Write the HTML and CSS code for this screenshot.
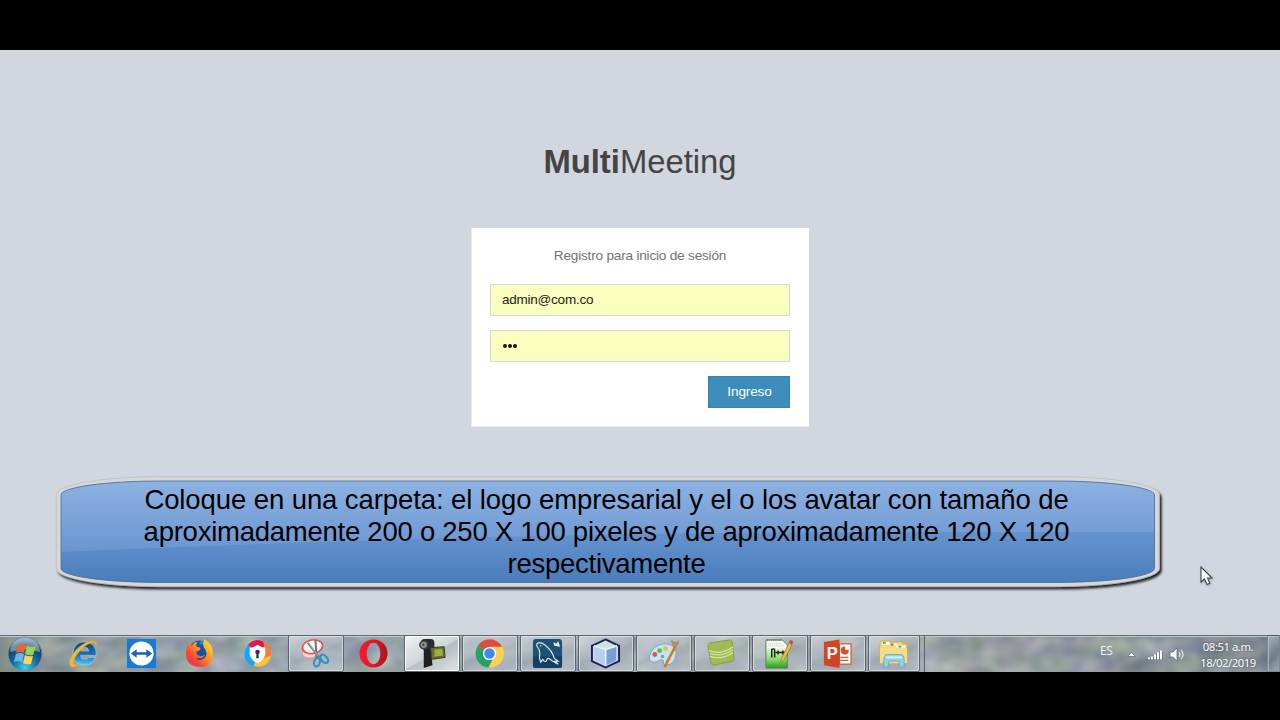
FILE: index.html
```html
<!DOCTYPE html>
<html lang="es">
<head>
<meta charset="utf-8">
<title>MultiMeeting</title>
<link rel="stylesheet" href="styles.css">
</head>
<body>
<div class="screen">
  <main class="desktop">
    <h1 class="brand"><b>Multi</b>Meeting</h1>
    <section class="login">
      <p class="login-title">Registro para inicio de sesión</p>
      <div class="field">admin@com.co</div>
      <div class="field"><span class="dots"><i></i><i></i><i></i></span></div>
      <button class="submit">Ingreso</button>
    </section>
    <aside class="callout">
      <svg class="callout-shape" width="1116" height="122" viewBox="50 472 1116 122">
        <defs>
          <linearGradient id="base" x1="0" y1="0" x2="0" y2="1"><stop offset="0" stop-color="#79a4da"/><stop offset=".6" stop-color="#608fcb"/><stop offset="1" stop-color="#497cba"/></linearGradient>
          <linearGradient id="gloss" x1="0" y1="0" x2="0" y2="1"><stop offset="0" stop-color="#8eb3e3"/><stop offset="1" stop-color="#6995cf"/></linearGradient>
          <filter id="shade" x="-5%" y="-15%" width="110%" height="140%"><feDropShadow dx="2" dy="2.5" stdDeviation="1.3" flood-color="#000" flood-opacity=".85"/></filter>
          <clipPath id="inside"><rect x="61" y="481" width="1093.5" height="101.5" rx="100" ry="14"/></clipPath>
        </defs>
        <rect x="56.3" y="476.6" width="1103" height="110" rx="105" ry="18" fill="#d7d7d6" stroke="#b9bbc0" stroke-width=".7" filter="url(#shade)"/>
        <g clip-path="url(#inside)">
          <path d="M60 480H1156V584H60Z" fill="url(#base)"/>
          <path d="M60 480H1156V532H850Q500 533 60 552Z" fill="url(#gloss)"/>
        </g>
        <rect x="61" y="481" width="1093.5" height="101.5" rx="100" ry="14" fill="none" stroke="#486c9c" stroke-width=".8"/>
      </svg>
      <p class="callout-text"><span class="wide">Coloque en una carpeta: el logo empresarial y el o los avatar con tamaño de</span><br>aproximadamente 200 o 250 X 100 pixeles y de aproximadamente 120 X 120<br>respectivamente</p>
    </aside>
    <svg class="cursor" width="16" height="22" viewBox="0 0 16 22"><path d="M1 1V16L4.5 13L7 18.5L9.8 17.3L7.5 12H12Z" fill="#fff" stroke="#3d4358" stroke-width="1.1"/></svg>
  </main>

  <footer class="taskbar">
    <svg class="texture" width="1280" height="37"><filter id="mist" x="0" y="0" width="100%" height="100%" color-interpolation-filters="sRGB"><feTurbulence type="fractalNoise" baseFrequency=".035 .05" numOctaves="2" seed="8"/><feColorMatrix values=".7 .1 0 0 .2 .6 .3 0 0 .18 .5 0 .3 0 .23 0 0 0 0 1"/></filter><rect width="1280" height="37" filter="url(#mist)"/></svg>
    <div class="start">
      <svg width="36" height="36" viewBox="0 0 36 36">
        <defs><radialGradient id="orb" cx=".5" cy=".9" r=".9"><stop offset="0" stop-color="#43cbea"/><stop offset=".4" stop-color="#16709e"/><stop offset=".75" stop-color="#123e63"/><stop offset="1" stop-color="#94b4c3"/></radialGradient></defs>
        <circle cx="18" cy="18" r="17" fill="url(#orb)" stroke="#7893a0"/>
        <path d="M3 16Q4 3 18 2Q32 3 33 16Q18 11 3 16" fill="#c3dbe4" opacity=".5"/>
        <path d="M11 9Q15 7 19 9L17 17Q13 15 9 17Z" fill="#ed6428"/>
        <path d="M20 10Q24 12 29 10L26 19Q22 20 18 18Z" fill="#9bd24e"/>
        <path d="M9 18Q13 16 17 18L15 26Q11 24 7 26Z" fill="#66b5ee"/>
        <path d="M18 19Q22 21 26 20L24 28Q19 29 16 27Z" fill="#ffd15a"/>
      </svg>
    </div>
    <div class="slot"><div class="app">
      <svg viewBox="0 0 32 32"><defs><linearGradient id="ie" x1="0" y1="0" x2="0" y2="1"><stop stop-color="#17426b"/><stop offset=".6" stop-color="#1b79be"/><stop offset="1" stop-color="#54c7f2"/></linearGradient></defs><path fill-rule="evenodd" d="M29 18H13Q13 22 17 22Q20 22 21 20H28Q26 28 17 28Q5 27 5 16Q6 4 17 4Q30 5 29 18ZM13 13.5H21.500Q21 9.500 17.200 9.500Q13.500 9.500 13 13.500Z" fill="url(#ie)" stroke="#c3dcea" stroke-width=".5"/><path d="M30 6C29 -1 15 4 7 14C0 23 0 30 5 30Q8 30 12 27C3 30 4 23 11 15C18 6 29 1 28 7Z" fill="#f1b73c" stroke="#d99e25" stroke-width=".5"/></svg>
    </div></div>
    <div class="slot"><div class="app">
      <svg viewBox="0 0 32 32"><rect x="1" y="1" width="30" height="30" rx="1" fill="#167bd4"/><circle cx="16" cy="16" r="12.5" fill="#fff"/><path d="M5 16L11 11.500V14.700H21V11.500L27 16L21 20.500V17.300H11V20.500Z" fill="#1766ad"/></svg>
    </div></div>
    <div class="slot"><div class="app">
      <svg viewBox="0 0 32 32"><defs><linearGradient id="fox" x1="1" y1="0" x2="0" y2="1"><stop stop-color="#fff044"/><stop offset=".4" stop-color="#ff9a20"/><stop offset=".7" stop-color="#fb4734"/><stop offset="1" stop-color="#e82275"/></linearGradient></defs><circle cx="16" cy="13" r="10.5" fill="#164fa7"/><path d="M16 3Q22 2 24 8Q19 5 16 8Z" fill="#1a83db"/><path d="M21 1Q31 7 30 18Q29 30 16 30Q2 29 2 16Q2 8 6 4Q6 6 8 8Q10 4 14 4Q12 7 13 9L17 10Q17 13 13 14Q12 17 15 18Q18 20 22 17Q18 23 12 20Q15 25 21 21Q25 17 22 12Q18 7 21 1Z" fill="url(#fox)"/></svg>
    </div></div>
    <div class="slot"><div class="app">
      <svg viewBox="0 0 32 32"><path d="M6 7Q16-3 26 7Q29 10 29 13L16 16Z" fill="#e4174d"/><path d="M6 7Q1 14 3 21Q6 28 14 30L16 16Z" fill="#16a6fb"/><path d="M25 6Q34 17 26 26Q21 31 12 29L16 18Z" fill="#fdc32a"/><path d="M22 3Q30 8 30 18L23 21V10Z" fill="#fb7838"/><path d="M8 10Q12 10 16 7Q20 10 24 10V17Q22 24 16 26Q10 24 8 17Z" fill="#fff"/><circle cx="16" cy="14.5" r="2.4" fill="#303746"/><path d="M15 15H17L17.4 21H14.6Z" fill="#303746"/></svg>
    </div></div>
    <div class="slot"><div class="app open">
      <svg viewBox="0 0 32 32"><ellipse cx="10" cy="16" rx="8" ry="5" fill="#f5d9da" stroke="#ed9292" stroke-width="1.5"/><ellipse cx="13" cy="9" rx="10.5" ry="7" fill="#f8f5f4" stroke="#df5554" stroke-width="1.7" transform="rotate(-10 13 9)"/><path d="M8 5L20 20M16 2L17 20" stroke="#687175" stroke-width="2"/><path d="M9 5L19 19" stroke="#eef5f5" stroke-width=".6"/><ellipse cx="17.5" cy="25" rx="3" ry="4.5" fill="none" stroke="#338fc2" stroke-width="2.2" transform="rotate(15 17.5 25)"/><ellipse cx="25" cy="21.5" rx="3" ry="5" fill="none" stroke="#338fc2" stroke-width="2.2" transform="rotate(-40 25 21.5)"/></svg>
    </div></div>
    <div class="slot"><div class="app">
      <svg viewBox="0 0 32 32"><defs><linearGradient id="op"><stop stop-color="#ff1829"/><stop offset=".65" stop-color="#d61625"/><stop offset="1" stop-color="#a5161c"/></linearGradient></defs><path fill-rule="evenodd" d="M16 1.500A14.500 14.500 0 1 0 16 30.500A14.500 14.500 0 1 0 16 1.500ZM16 5C12 5 9 10 9 16S12 27 16 27S23 22 23 16S20 5 16 5Z" fill="url(#op)"/></svg>
    </div></div>
    <div class="slot"><div class="app open active">
      <svg viewBox="0 0 32 32"><path d="M8 10L15 7L17 28L8 31Z" fill="#1e2022"/><rect x="5" y="1" width="14" height="11" rx="4" fill="#292c2e"/><circle cx="8" cy="7" r="4" fill="#8d9091" stroke="#3a3c3e" stroke-width="1.5"/><circle cx="7.5" cy="7" r="1.3" fill="#693f43"/><path d="M15 10L29 9L30 20L16 22Z" fill="#66702c" stroke="#33391c"/><path d="M19 12L27 11L28 18L19 19Z" fill="#a0ad45"/></svg>
    </div></div>
    <div class="slot"><div class="app open">
      <svg viewBox="0 0 32 32"><path d="M16 16L4 8A14.500 14.500 0 0 1 29 9Z" fill="#dc4c40"/><path d="M4 8A14.500 14.500 0 0 0 15 30.500L21 19Z" fill="#25a367"/><path d="M29 9A14.500 14.500 0 0 1 15 30.500L22 17L16 9Z" fill="#fed050"/><circle cx="16" cy="16" r="6.8" fill="#fff"/><circle cx="16" cy="16" r="5.4" fill="#4587f2"/></svg>
    </div></div>
    <div class="slot"><div class="app open">
      <svg viewBox="0 0 32 32"><rect x="1" y="1" width="30" height="30" rx="3" fill="#1d5276"/><path d="M1 19H31V28Q31 31 28 31H4Q1 31 1 28Z" fill="#154160"/><path d="M5 6Q8 3 13 7Q21 13 23 21L27 24L24 24L27 27L20 23Q16 19 15 23Q14 26 11 22L9 25Q7 20 8 16Q8 12 5 8Z" fill="none" stroke="#dce7ee" stroke-width="1.2"/><circle cx="9" cy="8" r=".7" fill="#fff"/><path d="M22 4L25 6L27 3L29 9L23 8Z" fill="#e6eff4"/></svg>
    </div></div>
    <div class="slot"><div class="app open">
      <svg viewBox="0 0 32 32"><path d="M16 1.500L30 8V24L16 30.500L2 24V8Z" fill="#c6d6e4" stroke="#211e56" stroke-width="2"/><path d="M16 3L27 8.500L17 12L5 8.500Z" fill="#cbe4dd"/><path d="M5 9L16 12V28L5 23Z" fill="#b5cff0"/><path d="M17 12L27 9V23L17 28Z" fill="#7c9ed5"/><path d="M16 12L4 8M16 12V28M16 12L28 8" stroke="#e7f1fb" stroke-width="1.5"/></svg>
    </div></div>
    <div class="slot"><div class="app open">
      <svg viewBox="0 0 32 32"><path d="M3 15Q6 8 16 6Q29 6 29 16Q28 27 19 28Q15 28 16 24Q16 21 12 23Q5 27 2 23Q0 20 3 15Z" fill="#c6e5f2" stroke="#6daec9"/><circle cx="7" cy="17" r="2.5" fill="#e45540"/><circle cx="12" cy="13" r="2.5" fill="#60b852"/><circle cx="18" cy="11" r="2.5" fill="#f2bd34"/><circle cx="15" cy="19" r="1.8" fill="#779eaf"/><path d="M17 30L28 9" stroke="#d77824" stroke-width="2.7"/><path d="M24 3L29 5L32 3L30 8L27 10Z" fill="#bd9063" stroke="#9c7049" stroke-width=".6"/></svg>
    </div></div>
    <div class="slot"><div class="app open">
      <svg viewBox="0 0 32 32"><path d="M4 5L25 2Q27 2 27 4L29 22Q29 24 27 24L8 28Q6 28 5 26L2 8Q2 6 4 5Z" fill="#a5b957" stroke="#8b9c45"/><path d="M3 13Q16 18 28 9M4 16Q17 20 28 12M4 19Q17 23 28 15" fill="none" stroke="#dbe4a8" stroke-width="1.2"/></svg>
    </div></div>
    <div class="slot"><div class="app open">
      <svg viewBox="0 0 32 32"><defs><linearGradient id="note" x1="0" y1="0" x2="0" y2="1"><stop offset=".25" stop-color="#f4fbef"/><stop offset=".7" stop-color="#86d969"/><stop offset="1" stop-color="#24a01b"/></linearGradient></defs><path d="M2 2H19L24 7V31H2Z" fill="url(#note)" stroke="#667660"/><path d="M3 2H19" stroke="#777" stroke-width="2" stroke-dasharray="1 1"/><path d="M4 6H18M4 8H20" stroke="#cad2d0" stroke-width=".7"/><path d="M8 20V11M8 12Q11 10 11 13V20M12 15H17M14.500 13V17M17 15H22M19.500 13V17" fill="none" stroke="#162617" stroke-width="1.5"/><path d="M17 26L18 21L26 5L29 7L21 22Z" fill="#eebb3d" stroke="#95702c" stroke-width=".7"/><path d="M26 5L27 2L30 3L29 7Z" fill="#b44b4d"/></svg>
    </div></div>
    <div class="slot"><div class="app open">
      <svg viewBox="0 0 32 32"><path d="M18 6H30V27H18Z" fill="#fff" stroke="#d65333" stroke-width="1.2"/><circle cx="23.500" cy="13" r="4.200" fill="#d65333"/><path d="M24 12V8Q28 8 28 12Z" fill="#fff"/><path d="M19 20H27M19 23H27" stroke="#d65333" stroke-width="1.300"/><path d="M2 4L18 1.500V31L2 28Z" fill="#d34524"/><text x="5" y="22" class="office">P</text></svg>
    </div></div>
    <div class="slot stack"><div class="app open">
      <svg viewBox="0 0 32 32"><path d="M2 6V26H26L30 24V6H25V4H15V6H13V3H3Z" fill="#f5db76" stroke="#c9a743" stroke-width=".8"/><path d="M4 4H12V7H4M12 6H20V8H12M19 8H28V11H19" fill="#f8fbef"/><path d="M5 4H8V6H5Z" fill="#43b557"/><path d="M13 6H16V8H13Z" fill="#d85a36"/><path d="M21 8H24V10H21Z" fill="#3ba4dc"/><path d="M2 10H30V26H2Z" fill="#f5de82"/><path d="M6 22Q6 17 10 17H23Q27 17 27 22V30H22V24H11V30H6Z" fill="#91d0ea" stroke="#61a6c7" stroke-width=".8"/><path d="M8 20H25" stroke="#d6f3fb" stroke-width="2"/></svg>
    </div></div>
    <div class="tray">
      <span class="lang">ES</span>
      <svg class="tray-icons" width="60" height="18" viewBox="0 0 60 18">
        <path d="M2.500 11.500L6.500 7.500L10.500 11.500Z" fill="#f5f8fb" stroke="#5b6272" stroke-width=".7"/>
        <path d="M24 15V13M27 15V12M30 15V10M33 15V8M36 15V6" stroke="#505963" stroke-width="3.200"/>
        <path d="M24 14.500V12.500M27 14.500V11.500M30 14.500V9.500M33 14.500V7.500M36 14.500V5.500" stroke="#fff" stroke-width="2.200"/>
        <path d="M45 7H48L52 3V16L48 12H45Z" fill="#fff" stroke="#555f69" stroke-width=".7"/><path d="M54 7Q56 9.500 54 12M56 5Q60 9.500 56 14" stroke="#eef2f4" fill="none" stroke-width="1.100"/>
      </svg>
      <div class="clock">08:51 a.m.<br>18/02/2019</div>
      <div class="peek"></div>
    </div>
  </footer>
</div>
</body>
</html>
```
FILE: styles.css
```css
* { box-sizing: border-box; }
body { margin: 0; background: #000; font-family: "Liberation Sans", Arial, sans-serif; }
.screen { width: 1280px; height: 720px; padding: 50px 0 48px; background: #000; overflow: hidden; }
.desktop { position: relative; height: 585px; padding-top: 91px; background: #d2d6df; }
.brand { margin: 0; height: 87px; text-align: center; font-size: 32.8px; line-height: 41px; font-weight: 400; color: #444; }
.brand b { font-weight: 700; }
.login { width: 338px; height: 199px; margin: 0 auto; padding: 18px 19px 0 18px; background: #fff; border: 1px solid #e8eaed; border-width: 0 0 1px 1px; }
.login-title { margin: 0 0 19px; text-align: center; font-size: 13.6px; line-height: 19px; letter-spacing: -.2px; color: #727272; }
.field { height: 32px; width: 300px; margin-bottom: 14px; padding: 0 11px; border: 1px solid #d2d6de; background: #faffbd; color: #222; font-size: 13.5px; letter-spacing: -.23px; line-height: 30px; }
.dots { display: flex; height: 30px; align-items: center; gap: 1px; padding-left: 1px; }
.dots i { width: 4px; height: 4px; border-radius: 50%; background: #111; }
.submit { display: block; margin: 0 0 0 auto; width: 82px; height: 32px; padding: 0 0 1px 1px; border: 1px solid #3684b0; background: #3c8dbc; color: #fff; font: 13.6px "Liberation Sans", Arial, sans-serif; letter-spacing: -.15px; }
.callout { position: absolute; left: 50px; top: 422px; width: 1116px; height: 122px; }
.callout-shape { display: block; position: absolute; inset: 0; }
.callout-text { position: relative; margin: 0; padding-top: 12px; width: 1113px; text-align: center; font-size: 27.5px; line-height: 32px; letter-spacing: -.25px; color: #000; white-space: nowrap; }
.wide { letter-spacing: -.09px; }
.cursor { position: absolute; left: 1200px; top: 516px; filter: drop-shadow(1px 1px 1px #777b8788); }
.taskbar { position: relative; display: flex; height: 37px; overflow: hidden; background: linear-gradient(90deg, #6b7878 0, #98a4a8 7%, #9caeb8 22%, #9ba7b0 55%, #92989f 80%, #7a8793 90%, #6e7b86 100%); box-shadow: inset 0 1px #646c73, inset 0 2px #c0c8cd; }
.texture { position: absolute; left: 0; top: 2px; opacity: .45; }
.start { position: relative; width: 55px; padding: 1px 0 0 7px; }
.slot { position: relative; width: 58px; height: 37px; padding: 0 1px; }
.app { height: 37px; display: flex; align-items: center; justify-content: center; padding-right: 1px; }
.app svg { width: 31px; height: 31px; flex: none; }
.open { border: 1px solid #5c646b; border-radius: 2px; background: linear-gradient(160deg, #dfe4e8aa, #c3cad177 45%, #b2bac277 50%, #ccd4dc88); box-shadow: inset 0 0 0 1px #e2e8ecaa; }
.active { background: linear-gradient(150deg, #fafafaee, #dbe0e3cc 50%, #c4cbd0bb 52%, #e6eaecdd); box-shadow: inset 0 0 0 1px #fff; }
.stack { border-right: 1px solid #5c646b; }
.stack .app { width: 52px; }
.office { font: bold 17px "Liberation Sans", Arial, sans-serif; fill: #fff; }
.tray { position: relative; display: flex; margin-left: auto; color: #fff; }
.lang { width: 25px; padding-top: 9px; font: 12px/14px "Open Sans", sans-serif; letter-spacing: -.3px; color: #edf0f2; }
.tray-icons { margin-top: 10px; }
.clock { width: 82px; padding: 4px 0 0 4px; text-align: center; font: 11.3px/16px "Noto Sans", "Open Sans", sans-serif; letter-spacing: -.45px; text-shadow: 0 0 2px #485461; }
.peek { width: 13px; border: 1px solid #7c8890; border-top-color: #4f5860; background: linear-gradient(135deg, #c3cdd3aa, #66748066 60%, #a9b5bdaa); box-shadow: inset 1px 0 #c3ccd1aa; }
```
